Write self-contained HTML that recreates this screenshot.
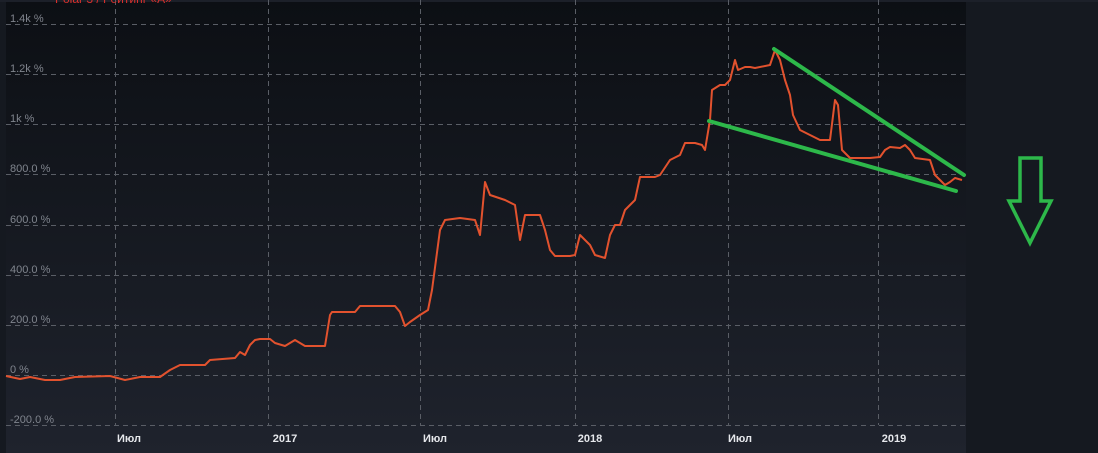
<!DOCTYPE html>
<html><head><meta charset="utf-8"><style>
html,body{margin:0;padding:0;width:1098px;height:453px;overflow:hidden;background:#151920;font-family:"Liberation Sans","DejaVu Sans",sans-serif}
</style></head><body>
<svg width="1098" height="453" viewBox="0 0 1098 453" xmlns="http://www.w3.org/2000/svg" style="position:absolute;left:0;top:0">
<defs><linearGradient id="g" x1="0" y1="0" x2="0" y2="1"><stop offset="0" stop-color="#0c0f14"/><stop offset="1" stop-color="#1f232d"/></linearGradient></defs>
<rect width="1098" height="453" fill="#151920"/>
<rect x="6" y="0" width="960" height="453" fill="url(#g)"/>
<rect x="0" y="0" width="6" height="453" fill="#151920"/>
<rect x="0" y="0" width="1098" height="2" fill="#1c2029"/>
<g stroke="#5a5e66" stroke-width="1" stroke-dasharray="5,4" fill="none">
<line x1="6" y1="24.5" x2="966" y2="24.5"/><line x1="6" y1="74.5" x2="966" y2="74.5"/><line x1="6" y1="124.5" x2="966" y2="124.5"/><line x1="6" y1="174.5" x2="966" y2="174.5"/><line x1="6" y1="225.5" x2="966" y2="225.5"/><line x1="6" y1="275.5" x2="966" y2="275.5"/><line x1="6" y1="325.5" x2="966" y2="325.5"/><line x1="6" y1="375.5" x2="966" y2="375.5"/><line x1="6" y1="425.5" x2="966" y2="425.5"/>
<line x1="115.5" y1="0" x2="115.5" y2="425"/><line x1="268.5" y1="0" x2="268.5" y2="425"/><line x1="420.5" y1="0" x2="420.5" y2="425"/><line x1="575.5" y1="0" x2="575.5" y2="425"/><line x1="728.5" y1="0" x2="728.5" y2="425"/><line x1="878.5" y1="0" x2="878.5" y2="425"/>
</g>
<g fill="#80858e" font-size="11">
<text x="10" y="22">1.4k %</text><text x="10" y="72">1.2k %</text><text x="10" y="122">1k %</text><text x="10" y="172">800.0 %</text><text x="10" y="223">600.0 %</text><text x="10" y="273">400.0 %</text><text x="10" y="323">200.0 %</text><text x="10" y="373">0 %</text><text x="10" y="423">-200.0 %</text>
</g>
<text x="55" y="3" fill="#d8302c" font-size="12">Polar 3 / Рейтинг «А»</text>
<g fill="#e6e8ec" font-size="11" font-weight="bold" text-anchor="middle">
<text x="129" y="442">Июл</text><text x="285" y="442">2017</text><text x="435" y="442">Июл</text><text x="590" y="442">2018</text><text x="740" y="442">Июл</text><text x="894" y="442">2019</text>
</g>
<polyline fill="none" stroke="#e2522e" stroke-width="2" stroke-linejoin="round" points="6,376 20,379 30,377 45,380 60,380 75,377 110,376 125,380 140,377 160,377 170,370 180,365 205,365 210,360 235,358 240,352 245,355 250,345 255,340 260,339 270,339 275,343 285,346 295,340 305,346 325,346 330,315 332,312 355,312 360,306 395,306 400,312 405,326 410,322 420,315 428,310 432,290 440,230 445,220 460,218 475,220 480,235 485,182 490,195 505,200 515,205 520,240 525,215 540,215 545,230 550,250 555,256 570,256 575,255 580,235 585,240 590,245 595,255 605,258 610,235 615,225 620,225 625,210 635,200 640,177 655,177 660,175 670,160 680,155 685,143 695,143 702,145 705,150 710,120 712,90 720,85 725,85 730,80 735,60 738,70 745,67 750,67 755,68 770,65 775,50 780,60 785,80 790,95 793,115 800,130 810,135 820,140 830,140 835,100 838,105 842,150 850,158 870,158 880,157 885,150 890,147 900,148 905,145 910,150 915,158 930,160 935,175 940,180 945,185 950,182 955,178 962,180"/>
<g stroke="#2db84a" stroke-width="4" stroke-linecap="round" fill="none">
<line x1="774" y1="49" x2="964" y2="175"/>
<line x1="709" y1="121" x2="956" y2="191"/>
<polygon stroke-width="3.5" stroke-linejoin="miter" points="1020,158 1041,158 1041,201 1051,201 1030,243 1009,201 1020,201"/>
</g>
</svg>
</body></html>
